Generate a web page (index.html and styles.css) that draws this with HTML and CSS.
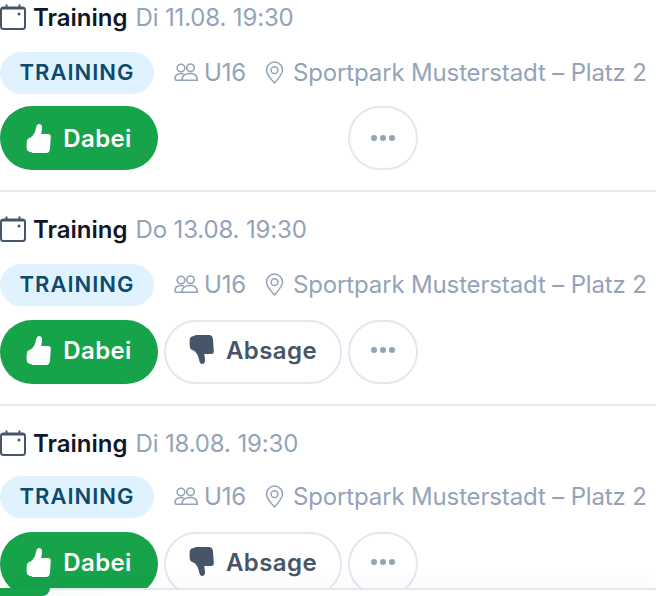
FILE: index.html
```html
<!DOCTYPE html>
<html lang="en">
<head>
    <meta charset="UTF-8">
    <title>Termine</title>
    <link rel="stylesheet" href="styles.css">
</head>
<body>
    <svg class="symbole">
        <symbol id="kalender" viewBox="0 0 26 26">
            <rect x="1" y="3.5" width="24" height="21.5" rx="2.5"/>
            <path d="M1.500 4.500h23M6.500 0.500v3M19.500 0.500v3"/>
            <circle class="punkt" cx="19" cy="10" r="1.500"/>
        </symbol>
        <symbol id="gruppe" viewBox="0 0 24 18">
            <circle cx="7" cy="5" r="3.800"/>
            <circle cx="16.500" cy="4.800" r="3.800"/>
            <path d="M8 17.200H2.500C1.500 17.200 1 16.700 1 15.800 1 12.500 3.500 10.500 7 10.500c1 0 2 .2 2.800.6M8 17.200c0-4.500 3.200-6.700 8-6.700s7.300 2.200 7.300 6.700z"/>
        </symbol>
        <symbol id="pin" viewBox="0 0 20 24">
            <path d="M10 23C5 17.500 1.500 13.500 1.500 9.500a8.500 8.500 0 0 1 17 0C18.500 13.500 15 17.500 10 23z"/>
            <circle cx="10" cy="9.500" r="3.600"/>
        </symbol>
        <symbol id="daumen" viewBox="0 0 25 30">
            <path d="M13 1c2 0 3 1.500 3 3.500 0 2-.3 4-.8 6.500h7c1.800 0 2.800 1.200 2.600 3l-.8 11.500C23.800 28.500 22.500 30 20 30H8c-1.500 0-2.300-.4-2.800-1C3 29 1 28 .8 26c-.3-2.800-.3-6 .2-8.500.3-1.500 1.500-2.500 3.500-3C7 13 8.500 10.500 9.500 7.500 10.300 4 10.800 1 13 1z"/>
        </symbol>
    </svg>

    <section class="liste">
        <article class="termin">
            <h2 class="kopf">
                <svg class="kalender"><use href="#kalender"/></svg>
                <span class="art">Training</span>
                <span class="zeit">Di 11.08. 19:30</span>
            </h2>
            <div class="info">
                <span class="tag">TRAINING</span>
                <span class="meta team"><svg class="gruppe"><use href="#gruppe"/></svg>U16</span>
                <span class="meta"><svg class="pin"><use href="#pin"/></svg>Sportpark Musterstadt – Platz 2</span>
            </div>
            <div class="knoepfe">
                <button class="knopf dabei"><svg class="daumen"><use href="#daumen"/></svg>Dabei</button>
                <span class="platz"></span>
                <button class="knopf mehr" aria-label="Mehr"><i></i><i></i><i></i></button>
            </div>
        </article>
        <article class="termin">
            <h2 class="kopf">
                <svg class="kalender"><use href="#kalender"/></svg>
                <span class="art">Training</span>
                <span class="zeit">Do 13.08. 19:30</span>
            </h2>
            <div class="info">
                <span class="tag">TRAINING</span>
                <span class="meta team"><svg class="gruppe"><use href="#gruppe"/></svg>U16</span>
                <span class="meta"><svg class="pin"><use href="#pin"/></svg>Sportpark Musterstadt – Platz 2</span>
            </div>
            <div class="knoepfe">
                <button class="knopf dabei"><svg class="daumen"><use href="#daumen"/></svg>Dabei</button>
                <button class="knopf absage"><svg class="daumen runter"><use href="#daumen"/></svg>Absage</button>
                <button class="knopf mehr" aria-label="Mehr"><i></i><i></i><i></i></button>
            </div>
        </article>
        <article class="termin">
            <h2 class="kopf">
                <svg class="kalender"><use href="#kalender"/></svg>
                <span class="art">Training</span>
                <span class="zeit">Di 18.08. 19:30</span>
            </h2>
            <div class="info">
                <span class="tag">TRAINING</span>
                <span class="meta team"><svg class="gruppe"><use href="#gruppe"/></svg>U16</span>
                <span class="meta"><svg class="pin"><use href="#pin"/></svg>Sportpark Musterstadt – Platz 2</span>
            </div>
            <div class="knoepfe">
                <button class="knopf dabei"><svg class="daumen"><use href="#daumen"/></svg>Dabei</button>
                <button class="knopf absage"><svg class="daumen runter"><use href="#daumen"/></svg>Absage</button>
                <button class="knopf mehr" aria-label="Mehr"><i></i><i></i><i></i></button>
            </div>
        </article>
    </section>
    <nav class="leiste"><span class="aktiv"></span></nav>
</body>
</html>
```
FILE: styles.css
```css
body {
    margin: 0;
    height: 596px;
    overflow: hidden;
    position: relative;
    background-color: white;
    font-family: "Inter", "Liberation Sans", sans-serif;
}
.symbole {
    display: none;
}
.liste {
    height: 588px;
    overflow: hidden;
}
.termin {
    padding-bottom: 20px;
    margin-bottom: 20px;
    border-bottom: 2px solid #e2e8f0;
}
.termin:last-child {
    border-bottom: none;
}
.termin:nth-child(n+2) .knoepfe {
    margin-top: 14px;
}
.termin:nth-child(n+2) .knopf {
    padding-bottom: 4px;
}
.termin:nth-child(3) .info {
    margin-top: 18px;
}
.kopf {
    margin: 0;
    height: 30px;
    padding-top: 2px;
    display: flex;
    align-items: center;
    gap: 8px;
    font-size: 24px;
    font-weight: 400;
}
.kalender {
    width: 26px;
    height: 26px;
    margin-right: -1px;
    fill: none;
    stroke: #475569;
    stroke-width: 2;
}
.punkt {
    fill: #475569;
    stroke: none;
}
.art {
    color: #0f172a;
    font-weight: 600;
}
.zeit {
    color: #94a3b8;
    letter-spacing: -0.15px;
}
.info {
    display: flex;
    align-items: center;
    margin-top: 20px;
    height: 42px;
}
.tag {
    flex-shrink: 0;
    box-sizing: border-box;
    width: 154px;
    height: 42px;
    padding-bottom: 2px;
    border-radius: 21px;
    background-color: #e0f2fe;
    color: #0c4a6e;
    font-size: 22px;
    font-weight: 600;
    letter-spacing: 1px;
    display: flex;
    align-items: center;
    justify-content: center;
    margin-right: 20px;
}
.meta {
    display: flex;
    align-items: center;
    padding-bottom: 2px;
    color: #94a3b8;
    font-size: 24px;
    letter-spacing: -0.15px;
    white-space: nowrap;
}
.team {
    margin-right: 19px;
}
.gruppe {
    width: 24px;
    height: 18px;
    margin-right: 6px;
    fill: none;
    stroke: #94a3b8;
    stroke-width: 1.6;
}
.pin {
    width: 19px;
    height: 23px;
    margin-right: 9px;
    fill: none;
    stroke: #94a3b8;
    stroke-width: 1.6;
}
.knoepfe {
    display: flex;
    gap: 6px;
    margin-top: 12px;
}
.knopf {
    box-sizing: border-box;
    height: 64px;
    border-radius: 32px;
    border: 2px solid #e2e8f0;
    background-color: white;
    font-family: inherit;
    font-size: 24px;
    font-weight: 600;
    letter-spacing: 0.4px;
    display: flex;
    align-items: center;
    justify-content: center;
    gap: 12px;
    padding: 0;
}
.daumen {
    width: 25px;
    height: 30px;
    fill: white;
}
.runter {
    fill: #475569;
    transform: scaleY(-1);
}
.dabei {
    width: 158px;
    border: none;
    background-color: #16a34a;
    color: white;
}
.absage {
    width: 178px;
    color: #475569;
}
.platz {
    width: 178px;
}
.mehr {
    width: 70px;
    gap: 3px;
}
.mehr i {
    width: 6px;
    height: 6px;
    border-radius: 50%;
    background-color: #94a3b8;
}
.leiste {
    position: absolute;
    left: 0;
    right: 0;
    bottom: 0;
    height: 8px;
    box-sizing: border-box;
    border-top: 2px solid #e2e8f0;
    background: linear-gradient(90deg, rgba(22, 163, 74, 0.05), white 140px);
    box-shadow: 0 -8px 14px rgba(15, 23, 42, 0.03);
}
.aktiv {
    display: block;
    width: 50px;
    height: 8px;
    margin-top: -2px;
    background-color: #16a34a;
    border-radius: 0 0 8px 0;
}
```
